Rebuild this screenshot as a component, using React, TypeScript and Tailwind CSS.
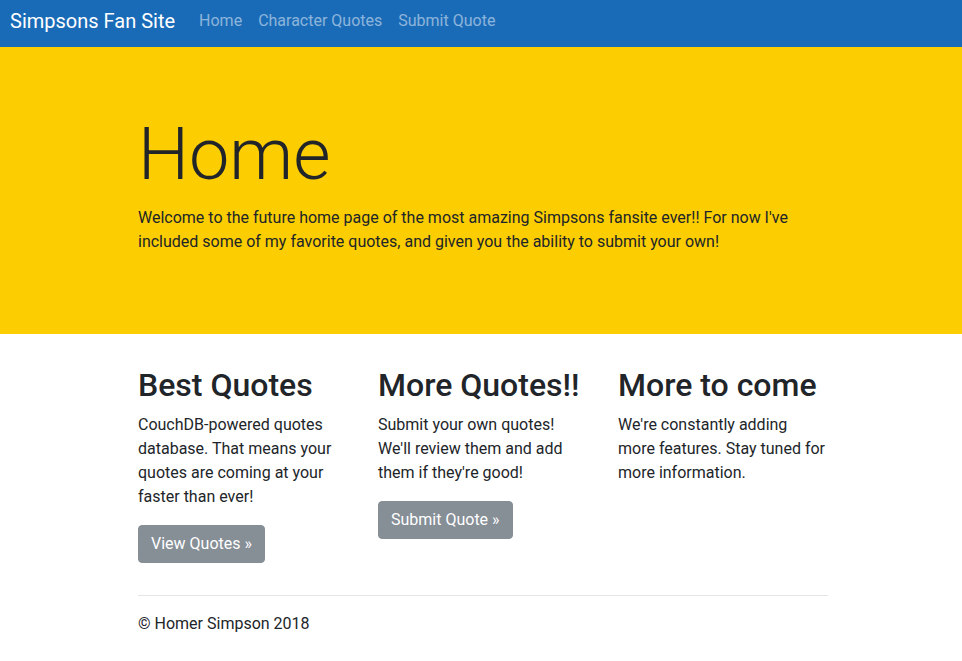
import React from 'react';

const features = [
  {
    title: 'Best Quotes',
    text: 'CouchDB-powered quotes database. That means your quotes are coming at your faster than ever!',
    button: 'View Quotes »',
  },
  {
    title: 'More Quotes!!',
    text: "Submit your own quotes! We'll review them and add them if they're good!",
    button: 'Submit Quote »',
  },
  {
    title: 'More to come',
    text: "We're constantly adding more features. Stay tuned for more information.",
    button: null,
  },
];

const App = () => {
  return (
    <div className="min-h-screen bg-white text-[#212529] font-['Roboto',sans-serif] text-base leading-6">
      <nav className="flex h-[47px] items-center bg-[#1a6bb7] pb-[6px] pl-[10px]">
        <a className="mr-4 text-[20px] leading-[30px] text-white">Simpsons Fan Site</a>
        <ul className="flex">
          <li><a className="block px-2 text-white/50">Home</a></li>
          <li><a className="block px-2 text-white/50">Character Quotes</a></li>
          <li><a className="block px-2 text-white/50">Submit Quote</a></li>
        </ul>
      </nav>

      <div className="bg-[#fccd00] pt-[65px] pb-16">
        <div className="mx-auto w-[724px] pl-[19px] pr-[15px]">
          <h1 className="mb-2 text-[72px] font-light leading-[1.2]">Home</h1>
          <p className="mb-4">
            Welcome to the future home page of the most amazing Simpsons fansite ever!! For now I've included some of my favorite quotes, and given you the ability to submit your own!
          </p>
        </div>
      </div>

      <div className="mx-auto mt-8 w-[724px] pl-[19px] pr-[15px]">
        <div className="grid grid-cols-3 -mx-[15px]">
          {features.map((f) => (
            <div key={f.title} className="px-[15px]">
              <h2 className="mb-2 text-[32px] font-medium leading-[1.2]">{f.title}</h2>
              <p className="mb-4">{f.text}</p>
              {f.button && (
                <a className="inline-block rounded border border-[#868e96] bg-[#868e96] px-3 py-[6px] text-white">{f.button}</a>
              )}
            </div>
          ))}
        </div>
        <hr className="mt-8 mb-4 border-t border-black/10" />
        <footer>
          <p>© Homer Simpson 2018</p>
        </footer>
      </div>
    </div>
  );
};

export default App;
